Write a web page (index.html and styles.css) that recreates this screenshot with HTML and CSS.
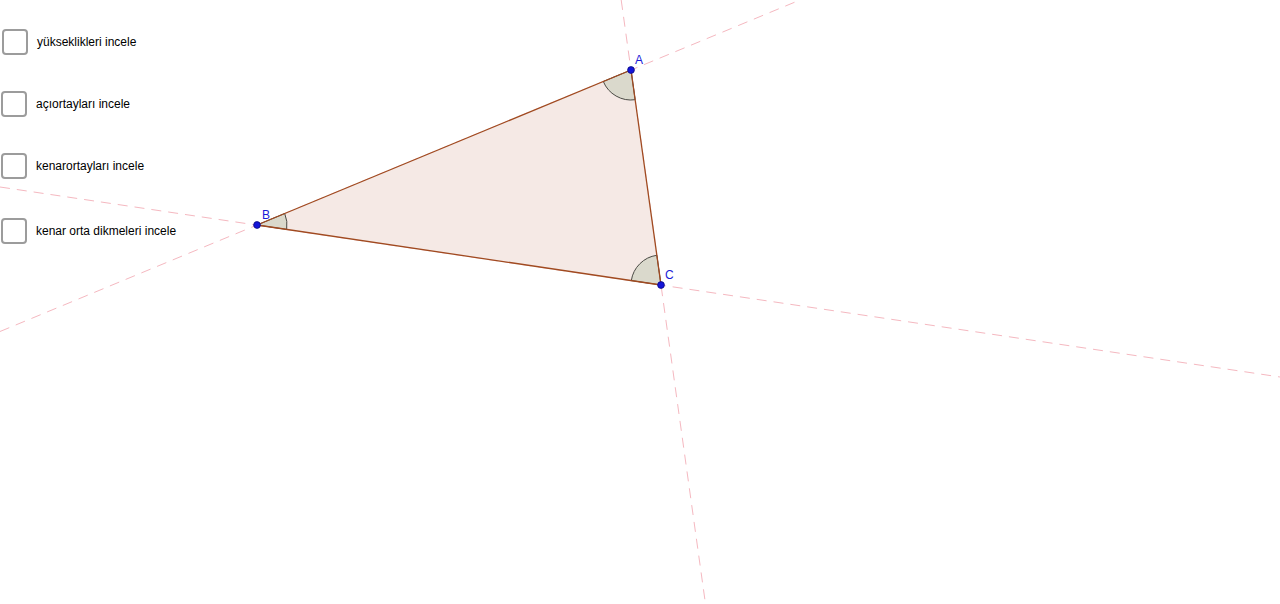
FILE: index.html
```html
<!DOCTYPE html>
<html lang="tr">
<head>
<meta charset="utf-8">
<title>Üçgen</title>
<link rel="stylesheet" href="styles.css">
</head>
<body>
<div class="applet">
  <svg class="canvas" width="1280" height="604" viewBox="0 0 1280 604" xmlns="http://www.w3.org/2000/svg">
    <g class="dash">
      <line x1="621.2" y1="0" x2="705.5" y2="604"/>
      <line x1="0" y1="331.5" x2="800" y2="0"/>
      <line x1="0" y1="187" x2="1280" y2="377"/>
    </g>
    <polygon class="tri" points="631,70 257,225 661,285"/>
    <g class="angle">
      <path d="M631,70 L603.29,81.49 A30,30 0 0 0 635.15,99.71 Z"/>
      <path d="M257,225 L284.71,213.51 A30,30 0 0 1 286.68,229.41 Z"/>
      <path d="M661,285 L631.32,280.59 A30,30 0 0 1 656.85,255.29 Z"/>
    </g>
    <g class="edges">
      <line x1="631" y1="70" x2="257" y2="225"/>
      <line x1="257" y1="225" x2="661" y2="285"/>
      <line x1="661" y1="285" x2="631" y2="70"/>
    </g>
    <g class="pts">
      <circle cx="631" cy="70" r="3.4"/>
      <circle cx="257" cy="225" r="3.4"/>
      <circle cx="661" cy="285" r="3.4"/>
    </g>
    <g class="lbl">
      <text x="635" y="64">A</text>
      <text x="262" y="219">B</text>
      <text x="665" y="279">C</text>
    </g>
  </svg>
  <div class="controls">
    <label class="row row-first"><span class="box"></span><span class="txt">yükseklikleri incele</span></label>
    <label class="row"><span class="box"></span><span class="txt">açıortayları incele</span></label>
    <label class="row"><span class="box"></span><span class="txt">kenarortayları incele</span></label>
    <label class="row row-last"><span class="box"></span><span class="txt">kenar orta dikmeleri incele</span></label>
  </div>
</div>
</body>
</html>
```
FILE: styles.css
```css
html, body {
  margin: 0;
  padding: 0;
  background: #ffffff;
  overflow: hidden;
}
.applet {
  position: relative;
  width: 1280px;
  height: 604px;
  font-family: "Liberation Sans", Arial, sans-serif;
}
.canvas {
  display: block;
}
.dash line {
  stroke: #f5b8c0;
  stroke-width: 1;
  stroke-dasharray: 10 7;
}
.tri {
  fill: #f5e9e5;
  stroke: none;
}
.angle path {
  fill: #dad9cc;
  stroke: #4a4a44;
  stroke-width: 1;
}
.edges line {
  stroke: #a04a20;
  stroke-width: 1.3;
}
.pts circle {
  fill: #1515d8;
  stroke: #0a0a80;
  stroke-width: 0.8;
}
.lbl text {
  fill: #1a1ad8;
  font-family: "Liberation Sans", Arial, sans-serif;
  font-size: 12px;
}
.controls {
  position: absolute;
  top: 29px;
  left: 1px;
  display: flex;
  flex-direction: column;
  gap: 36px;
}
.row {
  display: flex;
  align-items: center;
  gap: 9px;
  height: 26px;
  font-size: 12px;
  color: #000000;
}
.row-first {
  margin-left: 1px;
}
.row-last {
  margin-top: 3px;
}
.box {
  box-sizing: border-box;
  width: 26px;
  height: 26px;
  border: 2px solid #9c9c9c;
  border-radius: 4px;
  background: #ffffff;
}
```
